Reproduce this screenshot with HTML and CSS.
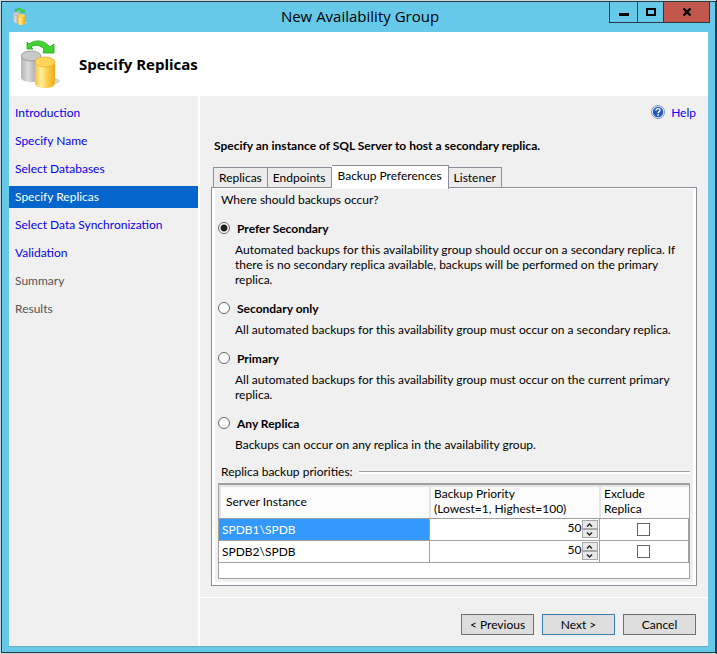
FILE: index.html
```html
<!DOCTYPE html>
<html lang="en">
<head>
    <meta charset="UTF-8">
    <meta name="viewport" content="width=device-width, initial-scale=1.0">
    <title>New Availability Group</title>
    <link rel="stylesheet" href="styles.css">
</head>
<body>
    <svg class="defs" width="0" height="0" aria-hidden="true">
        <defs>
            <linearGradient id="silver" x1="0" x2="1">
                <stop offset="0" stop-color="#b4b4b4"/>
                <stop offset="0.35" stop-color="#dcdcdc"/>
                <stop offset="1" stop-color="#8d8d8d"/>
            </linearGradient>
            <linearGradient id="gold" x1="0" x2="1">
                <stop offset="0" stop-color="#f8bf3a"/>
                <stop offset="0.3" stop-color="#fff0a0"/>
                <stop offset="0.6" stop-color="#fdd04a"/>
                <stop offset="1" stop-color="#efa91c"/>
            </linearGradient>
            <symbol id="replicas" viewBox="0 0 40 48">
                <ellipse cx="31" cy="41" rx="8" ry="3" fill="#d5d5d5"/>
                <path d="M0 16v21c0 3 4 5 10 5s10-2 10-5V16z" fill="url(#silver)"/>
                <ellipse cx="10" cy="16" rx="10" ry="5" fill="#c9c9c9" stroke="#8a8a8a" stroke-width="0.7"/>
                <path d="M14 22v21c0 3 4 5 10 5s10-2 10-5V22z" fill="url(#gold)"/>
                <ellipse cx="24" cy="22" rx="10" ry="5" fill="#ffd55c" stroke="#f0a91e" stroke-width="0.7"/>
                <path d="M6 2v7h6l-2-2c4-3 9-2 13 2l-1 4h11V4l-4 3C23 0 15-1 8 4z" fill="#42d42f" stroke="#22a51c" stroke-width="0.8"/>
            </symbol>
        </defs>
    </svg>

    <div class="window">
        <div class="titlebar">
            <svg class="app-icon"><use href="#replicas"/></svg>
            <span class="window-title">New Availability Group</span>
            <div class="window-buttons">
                <button type="button" class="min" aria-label="Minimize">
                    <svg width="12" height="10"><path d="M1 6h10v3H1z"/></svg>
                </button>
                <button type="button" class="max" aria-label="Maximize">
                    <svg width="12" height="10"><path d="M2 2h8v6H2z" fill="none" stroke="#000" stroke-width="2"/></svg>
                </button>
                <button type="button" class="close" aria-label="Close">
                    <svg width="10" height="10"><path d="M1.5 1.5l7 7M8.5 1.5l-7 7" stroke="#000" stroke-width="2.4"/></svg>
                </button>
            </div>
        </div>

        <div class="content">
            <header class="header">
                <svg class="header-icon"><use href="#replicas"/></svg>
                <h1>Specify Replicas</h1>
            </header>

            <div class="body">
                <nav class="steps">
                    <a href="#">Introduction</a>
                    <a href="#">Specify Name</a>
                    <a href="#">Select Databases</a>
                    <a href="#" class="current">Specify Replicas</a>
                    <a href="#">Select Data Synchronization</a>
                    <a href="#">Validation</a>
                    <span>Summary</span>
                    <span>Results</span>
                </nav>

                <div class="right">
                    <main class="page">
                        <div class="help">
                            <svg width="14" height="14" viewBox="0 0 14 14">
                                <circle cx="7" cy="7" r="6.5" fill="#e8effa" stroke="#7d94c4"/>
                                <circle cx="7" cy="7" r="5.2" fill="#2458c4"/>
                                <path d="M5 5.6c0-2.6 4-2.6 4-.3 0 1.3-1.9 1.4-1.9 3" fill="none" stroke="#fff" stroke-width="1.4"/>
                                <path d="M6.3 9.3h1.6v1.5H6.3z" fill="#fff"/>
                            </svg>
                            <a href="#">Help</a>
                        </div>
                        <h2>Specify an instance of SQL Server to host a secondary replica.</h2>

                        <div class="tabs" role="tablist">
                            <button type="button" role="tab">Replicas</button>
                            <button type="button" role="tab">Endpoints</button>
                            <button type="button" role="tab" class="selected" aria-selected="true">Backup Preferences</button>
                            <button type="button" role="tab">Listener</button>
                        </div>

                        <form class="panel">
                            <p class="question">Where should backups occur?</p>

                            <div class="option">
                                <input type="radio" name="pref" id="preferSecondary" checked>
                                <label for="preferSecondary">Prefer Secondary</label>
                                <p>Automated backups for this availability group should occur on a secondary replica. If there is no secondary replica available, backups will be performed on the primary replica.</p>
                            </div>
                            <div class="option">
                                <input type="radio" name="pref" id="secondaryOnly">
                                <label for="secondaryOnly">Secondary only</label>
                                <p>All automated backups for this availability group must occur on a secondary replica.</p>
                            </div>
                            <div class="option">
                                <input type="radio" name="pref" id="primary">
                                <label for="primary">Primary</label>
                                <p>All automated backups for this availability group must occur on the current primary replica.</p>
                            </div>
                            <div class="option">
                                <input type="radio" name="pref" id="anyReplica">
                                <label for="anyReplica">Any Replica</label>
                                <p>Backups can occur on any replica in the availability group.</p>
                            </div>

                            <div class="group-title">Replica backup priorities:</div>

                            <div class="grid">
                                <table>
                                    <thead>
                                        <tr>
                                            <th class="col-server">Server Instance</th>
                                            <th class="col-priority">Backup Priority<br>(Lowest=1, Highest=100)</th>
                                            <th class="col-exclude">Exclude<br>Replica</th>
                                        </tr>
                                    </thead>
                                    <tbody>
                                        <tr>
                                            <td class="active">SPDB1\SPDB</td>
                                            <td>
                                                <div class="spinner">
                                                    <input type="number" min="1" max="100" value="50" aria-label="Backup priority for SPDB1\SPDB">
                                                    <div class="arrows">
                                                        <button type="button" aria-label="Increase"><svg width="7" height="4"><path d="M1 3.5l2.5-2.5 2.5 2.5"/></svg></button>
                                                        <button type="button" aria-label="Decrease"><svg width="7" height="4"><path d="M1 .5l2.5 2.5L6 .5"/></svg></button>
                                                    </div>
                                                </div>
                                            </td>
                                            <td class="check"><input type="checkbox" aria-label="Exclude SPDB1\SPDB"></td>
                                        </tr>
                                        <tr>
                                            <td>SPDB2\SPDB</td>
                                            <td>
                                                <div class="spinner">
                                                    <input type="number" min="1" max="100" value="50" aria-label="Backup priority for SPDB2\SPDB">
                                                    <div class="arrows">
                                                        <button type="button" aria-label="Increase"><svg width="7" height="4"><path d="M1 3.5l2.5-2.5 2.5 2.5"/></svg></button>
                                                        <button type="button" aria-label="Decrease"><svg width="7" height="4"><path d="M1 .5l2.5 2.5L6 .5"/></svg></button>
                                                    </div>
                                                </div>
                                            </td>
                                            <td class="check"><input type="checkbox" aria-label="Exclude SPDB2\SPDB"></td>
                                        </tr>
                                    </tbody>
                                </table>
                            </div>
                        </form>
                    </main>

                    <footer class="footer">
                        <button type="button">&lt; Previous</button>
                        <button type="button" class="default">Next &gt;</button>
                        <button type="button">Cancel</button>
                    </footer>
                </div>
            </div>
        </div>
    </div>
</body>
</html>
```
FILE: styles.css
```css
* {
    box-sizing: border-box;
}
body {
    margin: 0;
    padding: 1px;
    min-height: 100vh;
    display: flex;
    background: linear-gradient(to left, #1f3a55 1px, #c4d8e0 1px);
    font-family: "Lato", "Open Sans", sans-serif;
    font-size: 12px;
    line-height: 15px;
    color: #000;
}
h1, h2, p {
    margin: 0;
}
button, input {
    font: inherit;
    color: inherit;
    margin: 0;
    padding: 0;
}
a {
    color: #0a00f0;
    text-decoration: none;
}
.defs {
    position: absolute;
}

/* window frame */
.window {
    flex: 1;
    display: flex;
    flex-direction: column;
    padding: 0 7px 5px;
    background-color: #66c9ea;
    border: 1px solid #2b3a42;
}
.titlebar {
    display: grid;
    grid-template-columns: 1fr auto 1fr;
    height: 30px;
    padding-left: 3px;
}
.app-icon {
    width: 16px;
    height: 17px;
    margin-top: 6px;
}
.window-title {
    font-family: "Open Sans", sans-serif;
    font-size: 15px;
    line-height: 28px;
}
.window-buttons {
    display: flex;
    justify-self: end;
    height: 21px;
    margin-right: -2px;
    border: 1px solid #2b3a42;
    border-top: none;
}
.window-buttons button {
    display: flex;
    align-items: center;
    justify-content: center;
    width: 28px;
    border: none;
    border-right: 1px solid #2b3a42;
    background: none;
}
.window-buttons .max {
    width: 26px;
}
.window-buttons .close {
    width: 45px;
    border-right: none;
    background-color: #c2574e;
}
.content {
    flex: 1;
    display: flex;
    flex-direction: column;
    background-color: #f0f0f0;
    border-bottom: 1px solid #6fa9c4;
}

/* header */
.header {
    display: flex;
    align-items: center;
    gap: 18px;
    height: 64px;
    padding-left: 12px;
    background-color: #fff;
}
.header-icon {
    width: 40px;
    height: 48px;
}
h1 {
    font-family: "Open Sans", sans-serif;
    font-size: 15px;
    line-height: 20px;
}
.body {
    flex: 1;
    display: flex;
}

/* steps */
.steps {
    width: 191px;
    flex: none;
    display: flex;
    flex-direction: column;
    gap: 6px;
    padding-top: 6px;
    border-right: 2px solid #fff;
}
.steps a, .steps span {
    height: 22px;
    padding-left: 6px;
    line-height: 22px;
}
.steps span {
    color: #555;
}
.steps .current {
    background-color: #0466cc;
    color: #fff;
}

/* page */
.right {
    flex: 1;
    display: flex;
    flex-direction: column;
}
.page {
    flex: 1;
    display: flex;
    flex-direction: column;
    padding: 8px 11px 11px;
    border-bottom: 1px solid #fff;
}
.help {
    display: flex;
    justify-content: flex-end;
    align-items: center;
    gap: 6px;
    height: 16px;
    padding-right: 1px;
}
h2 {
    margin-top: 18px;
    padding-left: 3px;
    font-size: 12px;
    line-height: 16px;
}
.tabs {
    display: flex;
    align-items: flex-end;
    height: 24px;
    margin: 11px 0 -2px;
    padding-left: 2px;
    z-index: 1;
}
.tabs button {
    height: 21px;
    margin-bottom: 1px;
    padding: 0 5px;
    border: 1px solid #8b8d98;
    border-left-width: 0;
    background-color: #ececec;
    white-space: nowrap;
}
.tabs button:first-child {
    border-left-width: 1px;
}
.tabs .selected {
    height: 24px;
    margin-bottom: 0;
    padding: 0 6px 4px;
    border-bottom: none;
    background-color: #fff;
}
.panel {
    flex: 1;
    display: flex;
    flex-direction: column;
    padding: 4px 6px 6px;
    border: 1px solid #8b8d98;
    box-shadow: inset 3px 1px 0 #fff, inset -3px -3px 0 #fff;
}
.question {
    padding-left: 3px;
    line-height: 16px;
}
.option {
    display: grid;
    grid-template-columns: 16px 1fr;
    column-gap: 3px;
    margin-top: 13px;
}
.option label {
    font-weight: bold;
    line-height: 15px;
}
.option p {
    grid-column: 1 / 3;
    padding: 6px 6px 1px 17px;
}
input[type="radio"] {
    appearance: none;
    width: 12px;
    height: 12px;
    margin-top: 1px;
    border: 1px solid #666;
    border-radius: 50%;
    background-color: #fff;
}
input[type="radio"]:checked {
    background: radial-gradient(circle, #222 3px, #fff 4px);
}
.group-title {
    display: flex;
    align-items: center;
    gap: 6px;
    margin-top: 11px;
    padding-left: 3px;
    line-height: 16px;
}
.group-title::after {
    content: "";
    flex: 1;
    height: 2px;
    border-top: 1px solid #a0a0a0;
    background-color: #fff;
}

/* priorities */
.grid {
    flex: 1;
    margin-top: 3px;
    border: 1px solid #a0a0a0;
    border-top-width: 2px;
    background-color: #fff;
}
table {
    width: 100%;
    border-collapse: collapse;
    table-layout: fixed;
}
th {
    height: 33px;
    padding: 0 5px;
    border-bottom: 1px solid #a0a0a0;
    background-color: #fcfcfc;
    box-shadow: inset 2px 2px 0 #e3e3e3;
    font-weight: normal;
    text-align: left;
}
td {
    height: 22px;
    padding: 0 3px;
    border: 1px solid #a0a0a0;
    border-left: none;
}
.col-server {
    width: 210px;
    padding-left: 7px;
}
.col-priority {
    width: 170px;
}
.active {
    background-color: #3399ff;
    color: #fff;
}
.spinner {
    display: flex;
    justify-content: flex-end;
    margin-right: -2px;
}
.spinner input {
    width: 40px;
    height: 15px;
    border: none;
    background: none;
    text-align: right;
    appearance: textfield;
}
.spinner input::-webkit-inner-spin-button {
    display: none;
}
.arrows button {
    display: flex;
    align-items: center;
    justify-content: center;
    width: 16px;
    height: 9px;
    border: 1px solid #a8a8a8;
    background-color: #e8e8e8;
}
.arrows path {
    fill: none;
    stroke: #222;
    stroke-width: 1.4;
}
.check {
    text-align: center;
}
input[type="checkbox"] {
    appearance: none;
    display: block;
    width: 13px;
    height: 13px;
    margin: 0 auto;
    border: 1px solid #666;
    background-color: #fff;
}

/* footer */
.footer {
    display: flex;
    justify-content: flex-end;
    gap: 8px;
    padding: 16px 12px 11px;
}
.footer button {
    width: 73px;
    height: 21px;
    border: 1px solid #707070;
    background-color: #ddd;
    line-height: 18px;
}
.footer .default {
    border-color: #3c7fb1;
}
```
